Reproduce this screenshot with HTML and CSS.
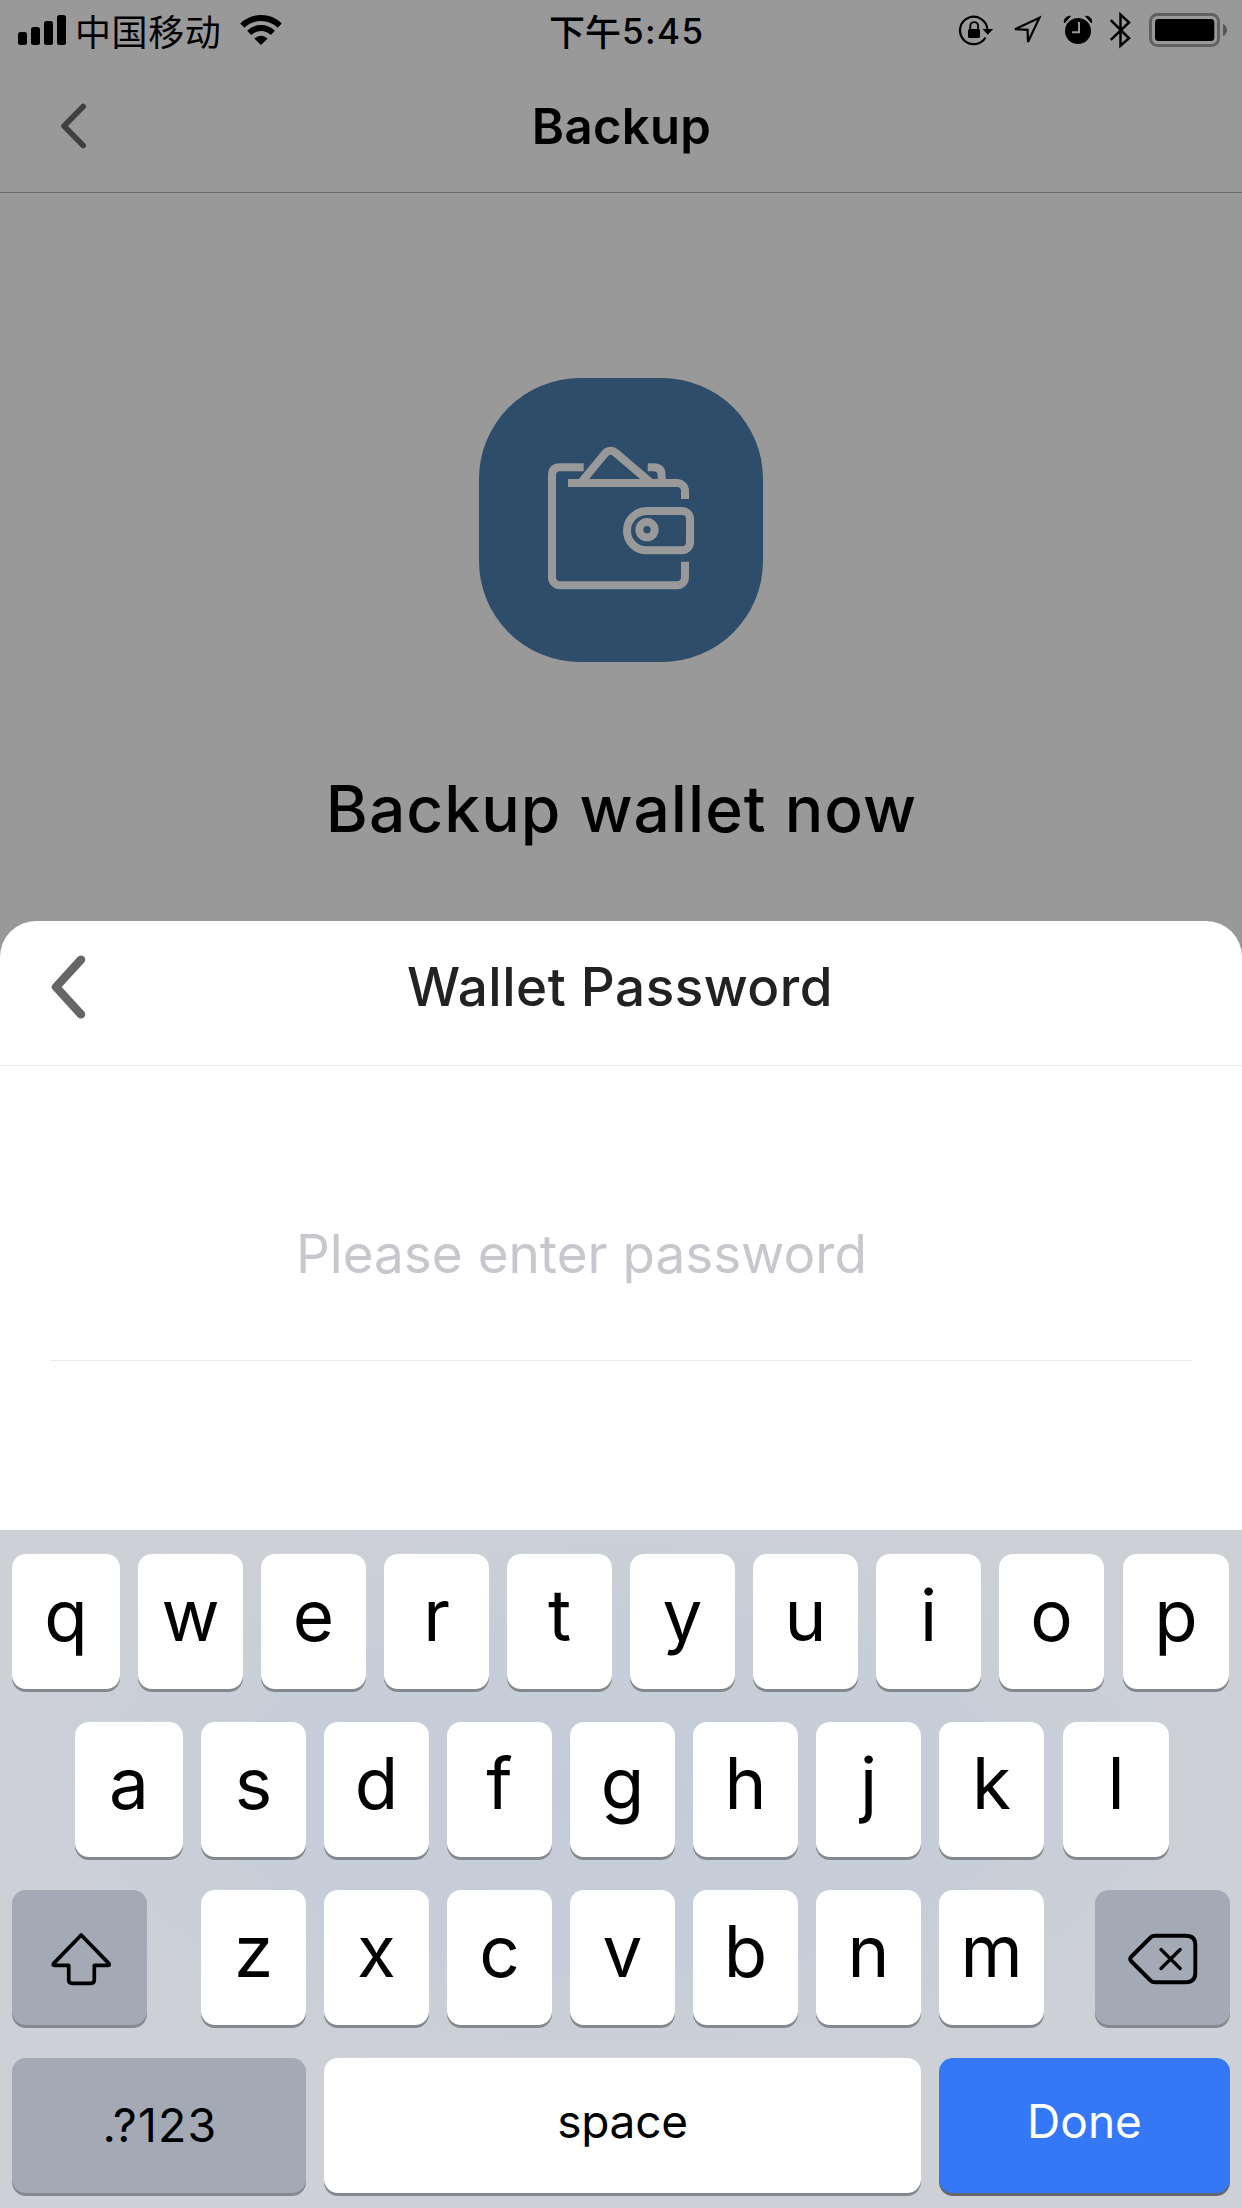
FILE: index.html
```html
<!DOCTYPE html>
<html lang="en">
<head>
<meta charset="utf-8">
<title>Backup</title>
<link rel="stylesheet" href="styles.css">
</head>
<body>
<main class="screen">
  <div class="status">
    <div class="status-left">
      <svg class="signal" width="48" height="30" viewBox="0 0 48 30"><rect y="17" width="9" height="13" rx="2.5"/><rect x="13" y="12" width="9" height="18" rx="2.5"/><rect x="26" y="6" width="9" height="24" rx="2.5"/><rect x="39" width="9" height="30" rx="2.5"/></svg>
      <span class="carrier" lang="zh">中国移动</span>
      <svg class="wifi" width="42" height="30" viewBox="0 0 42 30"><g fill="none" stroke="#000" stroke-width="6"><path d="M2.3 10.6A27 27 0 0 1 39.7 10.6"/><path d="M9.2 17.8A17 17 0 0 1 32.8 17.8"/></g><path d="M21 30L14.3 23.4Q21 18.2 27.7 23.4Z"/></svg>
    </div>
    <div class="time"><span lang="zh">下午</span><b>5:45</b></div>
    <div class="status-right">
      <svg width="284" height="40" viewBox="958 10 284 40">
        <path d="M985.5 37.5A13.7 13.7 0 1 1 987.4 29.5" fill="none" stroke="#000" stroke-width="2.2"/>
        <path d="M982.5 29H993.2L987.8 34.8Z"/>
        <rect x="968" y="29" width="12" height="9" rx="1.5"/>
        <path d="M970.3 30V26a3.9 3.9 0 0 1 7.8 0v4" fill="none" stroke="#000" stroke-width="1.9"/>
        <path d="M1015 29.2L1039.4 17.8L1028 42L1027.6 29.9Z" fill="none" stroke="#000" stroke-width="2.2"/>
        <circle cx="1078" cy="31" r="13"/>
        <path d="M1064.4 23a5.5 5.5 0 0 1 6-6.8ZM1091.6 23a5.5 5.5 0 0 0-6-6.8Z" stroke="#000"/>
        <path d="M1079 22V32.2H1072" fill="none" stroke="#999" stroke-width="2"/>
        <path d="M1110.8 20.2L1129 38.3L1120.5 45.8V14.6L1129 22.4L1110.8 39.8" fill="none" stroke="#000" stroke-width="2.5"/>
        <rect x="1150.5" y="14.5" width="68" height="31" rx="7" fill="none" stroke="#616161" stroke-width="3"/>
        <rect x="1155" y="19" width="59.3" height="22" rx="3.5"/>
        <path d="M1223 24Q1227 26 1227 30T1223 36Z" fill="#555"/>
      </svg>
    </div>
  </div>
  <header class="nav">
    <svg class="back" width="27" height="46" viewBox="0 0 27 46"><path d="M23.2 3.5L4 23L23.2 42.5"/></svg>
    <h1>Backup</h1>
  </header>
  <section class="hero">
    <div class="tile">
      <svg width="284" height="284" viewBox="57 54 852 852">
        <g fill="none" stroke="#999" stroke-width="24">
          <path d="M371 322H300Q276 322 276 346V652a24 24 0 0 0 24 24H651a24 24 0 0 0 24-24V605"/>
          <path d="M324 369H651a24 24 0 0 1 24 24V417"/>
          <path d="M364 367L433 283Q451 263 470 281L571 367"/>
          <path d="M563 322H580Q605 322 605 346V360"/>
          <path d="M560 453H666a24 24 0 0 1 24 24V547a24 24 0 0 1-24 24H560a59 59 0 0 1 0-118Z"/>
          <circle cx="561" cy="509" r="23"/>
        </g>
      </svg>
    </div>
    <h2>Backup wallet now</h2>
  </section>
  <section class="sheet">
    <header class="sheet-head">
      <svg class="sheet-back" width="36" height="64" viewBox="0 0 36 64"><path d="M31 4.7L6 32L31 59.3"/></svg>
      <h3>Wallet Password</h3>
    </header>
    <div class="field">Please enter password</div>
  </section>
  <section class="keyboard">
    <div class="row row-q"><span class="key wide">q</span><span class="key">w</span><span class="key">e</span><span class="key">r</span><span class="key">t</span><span class="key">y</span><span class="key">u</span><span class="key">i</span><span class="key">o</span><span class="key last">p</span></div>
    <div class="row row-a"><span class="key wide">a</span><span class="key">s</span><span class="key">d</span><span class="key">f</span><span class="key">g</span><span class="key">h</span><span class="key">j</span><span class="key">k</span><span class="key last">l</span></div>
    <div class="row row-z">
      <span class="key dark shift"><svg width="60" height="54" viewBox="51 1932 60 54"><path d="M81.2 1935L109 1963.6Q110 1965.4 107.5 1965.4H94.3V1980Q94.3 1983.3 91 1983.3H72Q68.7 1983.3 68.7 1980V1965.4H55Q52.5 1965.4 53.5 1963.6Z" fill="none" stroke="#000" stroke-width="3.7" stroke-linejoin="round"/></svg></span>
      <span class="key">z</span><span class="key">x</span><span class="key">c</span><span class="key">v</span><span class="key">b</span><span class="key">n</span><span class="key">m</span>
      <span class="key dark delete"><svg width="70" height="54" viewBox="1128 1932 70 54"><g fill="none" stroke="#000" stroke-linecap="round" stroke-linejoin="round"><path d="M1131.5 1956.5L1150.5 1937.5Q1152.3 1935.8 1155 1935.8H1186Q1195.3 1935.8 1195.3 1945V1973Q1195.3 1982.2 1186 1982.2H1155Q1152.3 1982.2 1150.5 1980.5L1131.5 1961.5Q1129 1959 1131.5 1956.5Z" stroke-width="3.9"/><path d="M1161 1949.5L1180.2 1968.5M1180.2 1949.5L1161 1968.5" stroke-width="3.3"/></g></svg></span>
    </div>
    <div class="row row-space"><span class="key dark numbers">.?123</span><span class="key space">space</span><span class="key done">Done</span></div>
  </section>
</main>
</body>
</html>
```
FILE: styles.css
```css
* { box-sizing: border-box; }
body { margin: 0; background: #999; font-family: Inter, "Noto Sans CJK SC", sans-serif; color: #000; }
svg { display: block; flex: none; }
h1, h2, h3 { margin: 0; }
.screen { width: 1242px; height: 2208px; overflow: hidden; display: flex; flex-direction: column; }

.status { height: 60px; display: grid; grid-template-columns: 549px 1fr 284px; flex: none; }
.status-left { display: flex; padding-left: 18px; }
.signal { margin-top: 15px; }
.carrier { font: 400 36px/60px "Noto Sans CJK SC", sans-serif; letter-spacing: .6px; margin-left: 9px; width: 165px; white-space: nowrap; }
.wifi { margin-top: 15px; }
.time { display: flex; line-height: 62px; }
.time span { font-family: "Noto Sans CJK SC", sans-serif; font-size: 36px; font-weight: 500; line-height: 60px; }
.time b { font-size: 35px; font-weight: 550; letter-spacing: 1.4px; margin-left: 1px; }
.status-right { padding-top: 10px; }

.nav { height: 133px; flex: none; border-bottom: 1px solid #6b6b6b; display: grid; grid-template-columns: 60px 1fr 60px; }
.back { margin-top: 43px; margin-left: 60px; }
.back path { fill: none; stroke: #404040; stroke-width: 5.6; stroke-linecap: round; stroke-linejoin: round; }
.nav h1 { text-align: center; font-size: 49px; font-weight: 580; line-height: 134px; height: 132px; letter-spacing: .3px; padding-left: 1px; }

.hero { height: 728px; flex: none; padding-top: 185px; display: flex; flex-direction: column; align-items: center; }
.tile { width: 284px; height: 284px; border-radius: 101px; background: #2e4d6b; overflow: hidden; flex: none; }
.hero h2 { font-size: 64px; font-weight: 530; line-height: 80px; letter-spacing: 1.05px; margin-top: 107px; padding-left: 1px; }

.sheet { height: 609px; flex: none; background: #fff; border-radius: 36px 36px 0 0; }
.sheet-head { height: 145px; border-bottom: 1px solid #ececee; display: grid; grid-template-columns: 50px 1fr 50px; }
.sheet-back { margin: 34px 0 0 50px; }
.sheet-back path { fill: none; stroke: #666; stroke-width: 8.5; stroke-linecap: round; stroke-linejoin: round; }
.sheet h3 { text-align: center; font-size: 53px; font-weight: 500; line-height: 133px; letter-spacing: .5px; padding-right: 2px; color: #222; }
.field { height: 295px; margin: 0 50px; padding: 154px 0 0 246px; border-bottom: 1px solid #ececee; font-size: 53px; line-height: 68px; color: #c7c7cd; }

.keyboard { flex: 1; padding: 24px 12px 0; display: flex; flex-direction: column; gap: 33px; background: radial-gradient(ellipse 640px 300px at 50% 39%, #c5ccd9 0%, #c8ced9 60%, #cdd0d5 100%); }
.row { height: 135px; display: flex; gap: 18px; flex: none; }
.row-a { padding-left: 63px; }
.key { width: 105px; height: 135px; flex: none; border-radius: 14px; background: #fff; box-shadow: 0 3px 0 #85898d; text-align: center; font-size: 71px; font-weight: 370; line-height: 123px; }
.wide { width: 108px; }
.last { width: 106px; margin-left: 1px; }
.dark { background: #a3aab6; }
.shift, .delete { width: 135px; padding-top: 42px; }
.shift { padding-left: 39px; margin-right: 36px; }
.delete { padding-left: 33px; margin-left: 33px; }
.numbers, .space, .done { font-weight: 400; }
.numbers { width: 294px; font-size: 46.5px; line-height: 134px; letter-spacing: 1.2px; padding-left: 2px; }
.space { width: 597px; font-size: 46px; line-height: 126px; letter-spacing: -.25px; }
.done { width: 291px; font-size: 46px; line-height: 126px; background: #3478f7; color: #fff; box-shadow: 0 3px 0 #63676e; }
```
